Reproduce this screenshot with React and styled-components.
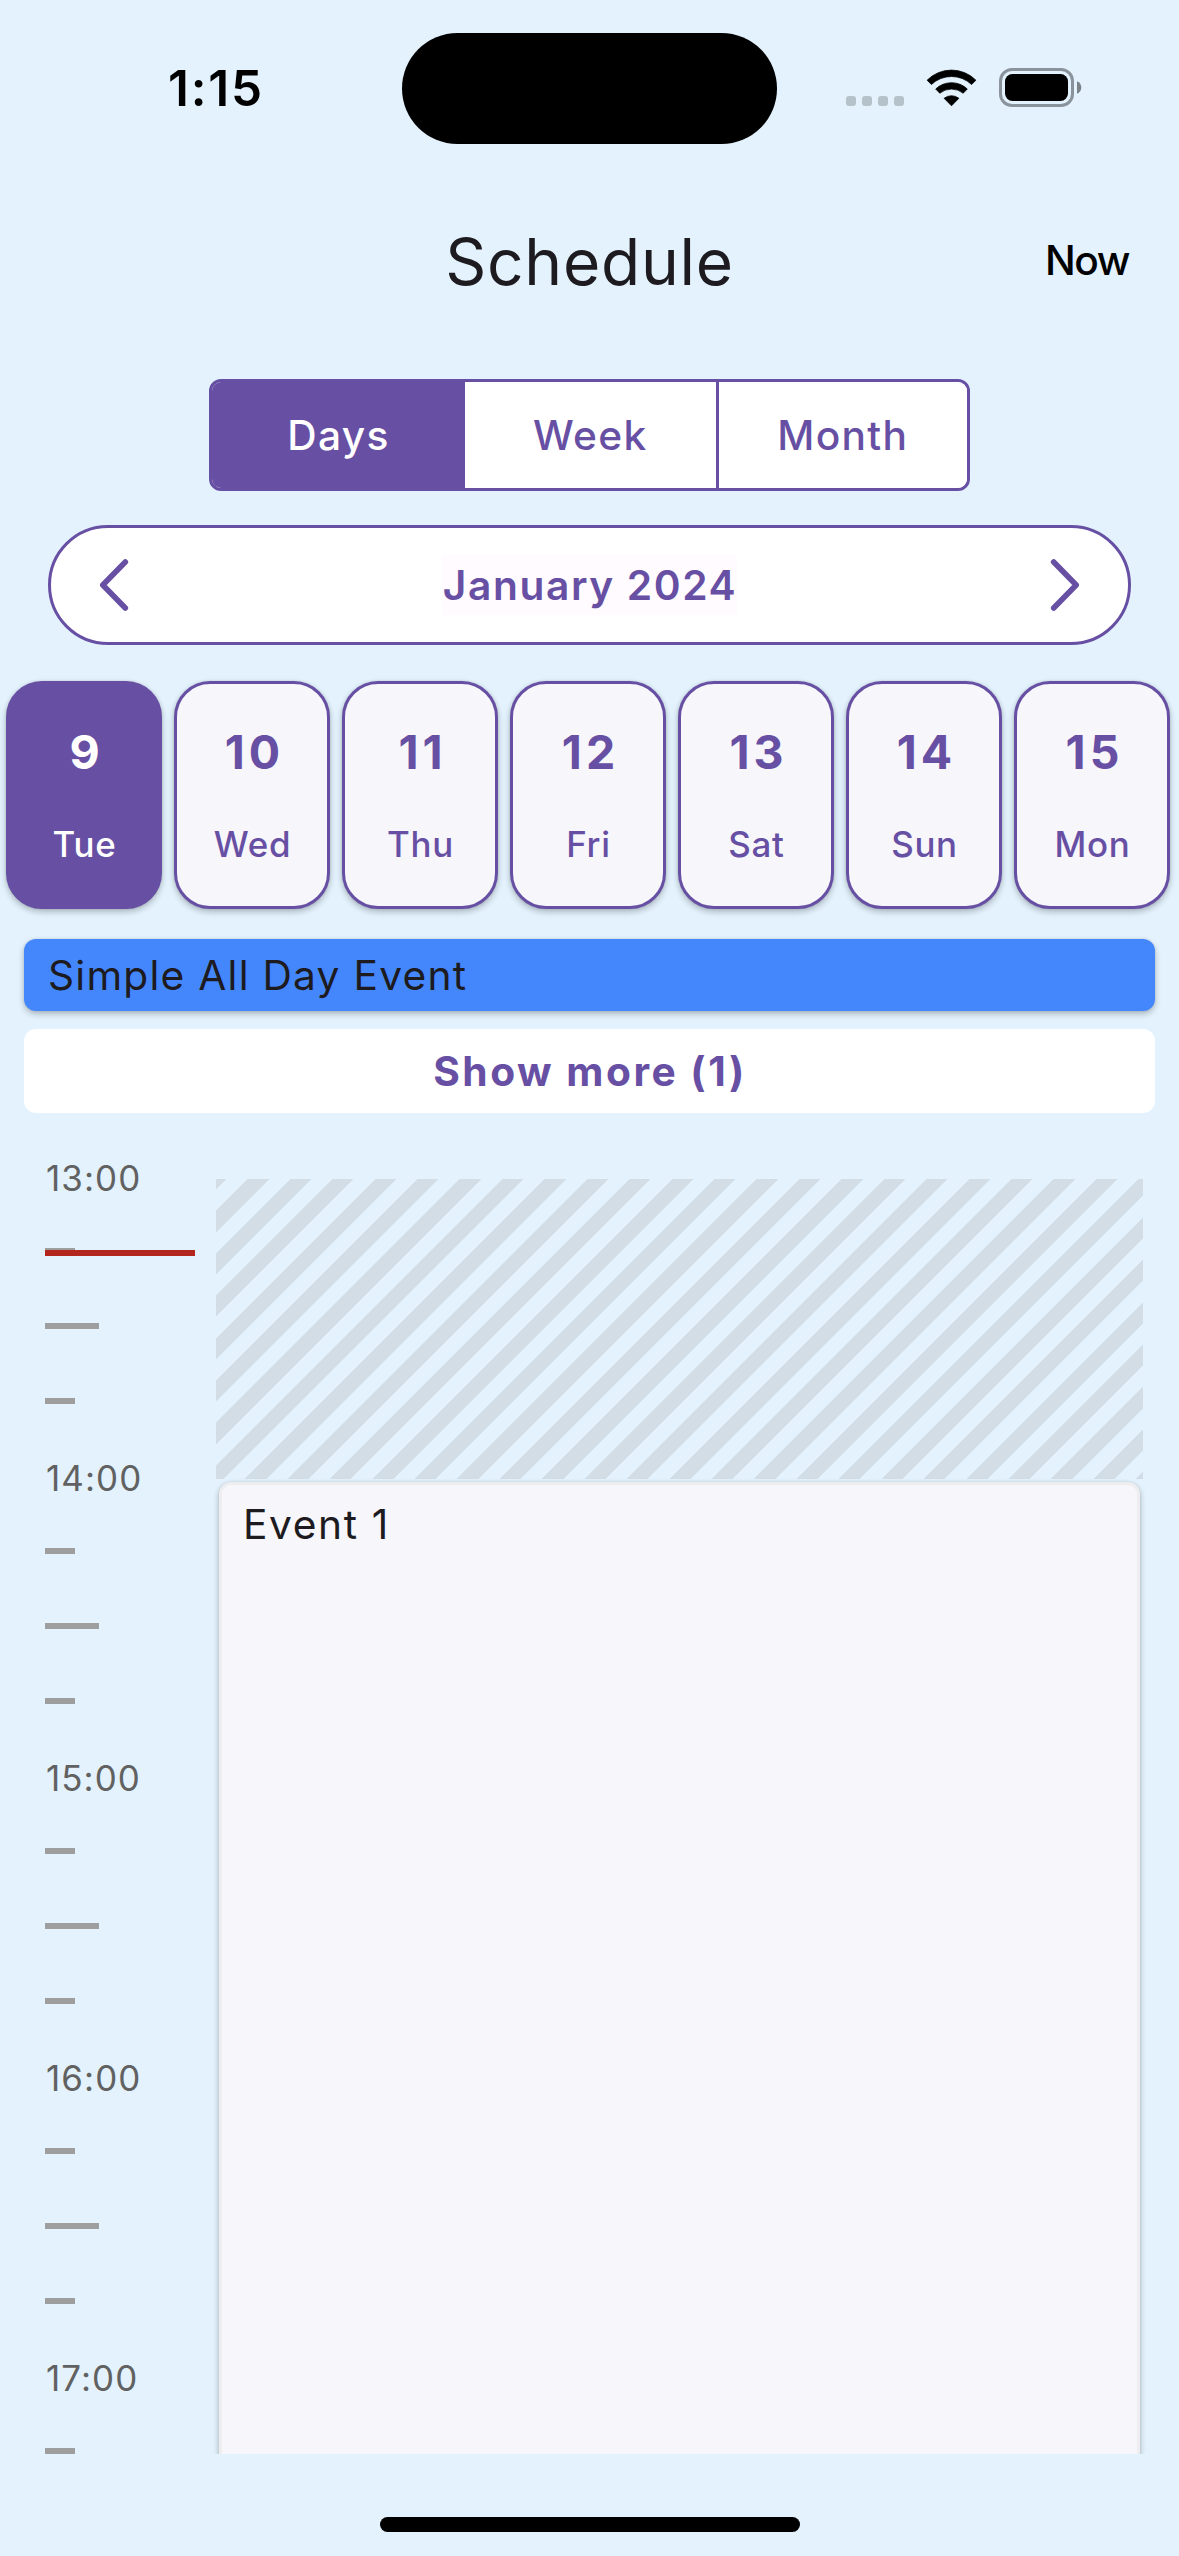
import React from "react";
import styled, { createGlobalStyle, css } from "styled-components";

const color = {
  page: "#e3f2fd",
  primary: "#6750a4",
  surface: "#f7f6fb",
  label: "#fffbff",
  text: "#1d1b20",
  hour: "#616161",
  tick: "#9e9e9e",
  now: "#b3261e",
  allDay: "#4487fc",
};

const cardShadow = "0 3px 6px rgba(0, 0, 0, 0.24), 0 0 3px rgba(0, 0, 0, 0.1)";

const GlobalStyle = createGlobalStyle`
  *, *::before, *::after { box-sizing: border-box; }
  body {
    margin: 0;
    background: ${color.page};
    font-family: Inter, "Liberation Sans", sans-serif;
  }
  button { font: inherit; color: inherit; background: none; border: 0; padding: 0; }
`;

const Screen = styled.div`
  display: flex;
  flex-direction: column;
  width: 1179px;
  height: 2556px;
  overflow: hidden;
  background: ${color.page};
  color: ${color.text};
`;

/* Status bar */

const StatusBar = styled.div`
  display: grid;
  grid-template-columns: 402px 375px 402px;
  align-items: center;
  height: 177px;
  color: #000;
`;

const Clock = styled.div`
  padding: 0 0 1px 168px;
  font-size: 49.4px;
  font-weight: 600;
  letter-spacing: 1.8px;
`;

const Island = styled.div`
  height: 111px;
  border-radius: 56px;
  background: #000;
`;

const StatusIcons = styled.div`
  display: flex;
  align-items: flex-end;
  height: 39px;
  margin-bottom: 2px;
  padding-left: 69px;
`;

const SignalDots = styled.div`
  display: flex;
  gap: 6px;
  margin: 0 22px 1px 0;
`;

const SignalDot = styled.span`
  width: 10px;
  height: 10px;
  border-radius: 3px;
  background: #b5c2ca;
`;

const WifiIcon = styled.svg`
  display: block;
  width: 52px;
  height: 38px;
  margin-right: 21px;
`;

const BatteryIcon = styled.svg`
  display: block;
  width: 83px;
  height: 39px;
`;

/* App bar */

const AppBar = styled.header`
  display: grid;
  grid-template-columns: 1fr auto 1fr;
  align-items: center;
  height: 168px;
`;

const Title = styled.h1`
  grid-column: 2;
  margin: 0;
  font-size: 64px;
  font-weight: 400;
  letter-spacing: 0.74px;
`;

const NowButton = styled.button`
  && {
    justify-self: end;
    padding: 0 50px 2px 0;
    color: #000;
    font-size: 40.7px;
    font-weight: 500;
    letter-spacing: -1.5px;
  }
`;

/* View switch */

const ViewSwitch = styled.div`
  display: grid;
  grid-template-columns: 253px 250.5px 1fr;
  align-self: center;
  width: 761px;
  height: 112px;
  margin-top: 34px;
  border: 3px solid ${color.primary};
  border-radius: 12px;
  background: #fff;
  overflow: hidden;
`;

const ViewOption = styled.button`
  && {
    color: ${(p) => (p.$active ? "#fff" : color.primary)};
    background: ${(p) => (p.$active ? color.primary : "#fff")};
    border-left: ${(p) => (p.$divided ? `3px solid ${color.primary}` : "0")};
    font-size: 40.7px;
    font-weight: 500;
    letter-spacing: 1.3px;
  }
`;

/* Month navigation */

const MonthBar = styled.nav`
  display: flex;
  align-items: center;
  justify-content: space-between;
  height: 120px;
  margin: 34px 48px 0;
  padding: 0 48px;
  border: 3px solid ${color.primary};
  border-radius: 60px;
  background: #fff;
  color: ${color.primary};
`;

const ArrowButton = styled.button`
  display: flex;
`;

const Chevron = styled.svg`
  width: 30px;
  height: 52px;
  fill: none;
  stroke: currentColor;
  stroke-width: 5.6;
  stroke-linecap: round;
  stroke-linejoin: round;
  transform: ${(p) => (p.$flip ? "scaleX(-1)" : "none")};
`;

const MonthLabel = styled.span`
  height: 60px;
  padding: 1px 0 0 1px;
  background: ${color.label};
  font-size: 40.7px;
  font-weight: 600;
  line-height: 60px;
  letter-spacing: 1.6px;
`;

/* Day strip */

const DayStrip = styled.div`
  display: flex;
  gap: 12px;
  margin-top: 36px;
  padding-left: 6px;
`;

const DayCard = styled.button`
  && {
    display: flex;
    flex: 0 0 156px;
    flex-direction: column;
    align-items: center;
    height: 228px;
    padding-top: 40px;
    border: 3px solid ${color.primary};
    border-radius: 36px;
    box-shadow: ${cardShadow};
    color: ${color.primary};
    background: ${color.surface};
    ${(p) =>
      p.$active &&
      css`
        color: #fff;
        background: ${color.primary};
      `}
  }
`;

const DayNumber = styled.span`
  font-size: 46.5px;
  font-weight: 700;
  line-height: 56px;
  letter-spacing: 4px;
  text-indent: 5px;
`;

const DayName = styled.span`
  margin-top: 42px;
  font-size: 34.9px;
  font-weight: 500;
  line-height: 44px;
  letter-spacing: 0.7px;
  text-indent: 1px;
`;

/* All-day events */

const AllDayEvent = styled.div`
  height: 72px;
  margin: 30px 24px 0;
  padding: 1px 0 0 24px;
  border-radius: 12px;
  background: ${color.allDay};
  box-shadow: ${cardShadow};
  font-size: 40.7px;
  line-height: 72px;
  letter-spacing: 1.25px;
`;

const ShowMore = styled.button`
  && {
    height: 84px;
    margin: 18px 24px 0;
    padding-left: 1px;
    border-radius: 12px;
    background: #fff;
    color: ${color.primary};
    font-size: 40.7px;
    font-weight: 700;
    letter-spacing: 2.5px;
  }
`;

/* Timeline */

const Timeline = styled.main`
  position: relative;
  display: grid;
  grid-template-columns: 171px 927px;
  height: 1300px;
  margin-top: 41px;
  padding-left: 45px;
  overflow: hidden;
`;

const Hour = styled.div`
  height: 300px;
`;

const HourLabel = styled.div`
  height: 48px;
  margin-bottom: 46px;
  padding-left: 1px;
  color: ${color.hour};
  font-size: 34.9px;
  line-height: 49px;
  letter-spacing: 1.1px;
`;

const Tick = styled.div`
  width: ${(p) => (p.$long ? 54 : 30)}px;
  height: 6px;
  background: ${color.tick};

  & + & {
    margin-top: 69px;
  }
`;

const NowLine = styled.div`
  position: absolute;
  top: 96px;
  left: 45px;
  width: 150px;
  height: 6px;
  background: ${color.now};
`;

const Lane = styled.div`
  display: flex;
  flex-direction: column;
  padding-top: 25px;
`;

const BlockedTime = styled.div`
  flex: 0 0 300px;
  background: repeating-linear-gradient(
    135deg,
    #d2dde5 0 7.5px,
    transparent 7.5px 22.5px,
    #d2dde5 22.5px 30px
  );
`;

const EventCard = styled.article`
  flex: 0 0 1194px;
  margin: 3px;
  padding: 15px 21px;
  border: 3px solid #eeeef1;
  border-radius: 12px;
  background: ${color.surface};
  box-shadow: ${cardShadow};
  font-size: 40.7px;
  line-height: 50px;
  letter-spacing: 1.6px;
`;

const HomeIndicator = styled.div`
  align-self: center;
  width: 420px;
  height: 15px;
  margin-top: 63px;
  border-radius: 8px;
  background: #000;
`;

const days = [
  ["9", "Tue"],
  ["10", "Wed"],
  ["11", "Thu"],
  ["12", "Fri"],
  ["13", "Sat"],
  ["14", "Sun"],
  ["15", "Mon"],
];

const hours = ["13:00", "14:00", "15:00", "16:00", "17:00"];

const Arrow = ({ flip, label }) => (
  <ArrowButton aria-label={label}>
    <Chevron $flip={flip} viewBox="0 0 30 52">
      <path d="M26.3 3 3.8 26l22.5 23" />
    </Chevron>
  </ArrowButton>
);

export default function App() {
  return (
    <>
      <GlobalStyle />
      <Screen>
        <StatusBar>
          <Clock>1:15</Clock>
          <Island />
          <StatusIcons>
            <SignalDots>
              <SignalDot />
              <SignalDot />
              <SignalDot />
              <SignalDot />
            </SignalDots>
            <WifiIcon viewBox="0 0 52 38">
              <g stroke="#000" strokeWidth="0.8" strokeLinejoin="round">
                <path d="M1.1 11.2A34.5 34.5 0 0 1 49.9 11.2L45.6 15.5A29.2 29.2 0 0 0 5.4 15.5Z" />
                <path d="M9.7 20A23 23 0 0 1 41.3 20L37.2 24.2A18.6 18.6 0 0 0 13.8 24.2Z" />
                <path d="M18.1 29.3A12 12 0 0 1 32.9 29.3L25.5 36.8Z" />
              </g>
            </WifiIcon>
            <BatteryIcon viewBox="0 0 83 39">
              <rect x="1.5" y="1.5" width="72" height="36" rx="11.5" fill="none" stroke="#8a939b" strokeWidth="3" />
              <rect x="6" y="6" width="63" height="27" rx="7.5" />
              <path d="M78 13.2c2.8 1 4.3 3.6 4.3 6.3S80.8 24.8 78 25.8Z" fill="#7b8389" />
            </BatteryIcon>
          </StatusIcons>
        </StatusBar>

        <AppBar>
          <Title>Schedule</Title>
          <NowButton>Now</NowButton>
        </AppBar>

        <ViewSwitch>
          <ViewOption $active>Days</ViewOption>
          <ViewOption>Week</ViewOption>
          <ViewOption $divided>Month</ViewOption>
        </ViewSwitch>

        <MonthBar>
          <Arrow label="Previous" />
          <MonthLabel>January 2024</MonthLabel>
          <Arrow label="Next" flip />
        </MonthBar>

        <DayStrip>
          {days.map(([number, name], i) => (
            <DayCard key={number} $active={i === 0}>
              <DayNumber>{number}</DayNumber>
              <DayName>{name}</DayName>
            </DayCard>
          ))}
        </DayStrip>

        <AllDayEvent>Simple All Day Event</AllDayEvent>
        <ShowMore>Show more (1)</ShowMore>

        <Timeline>
          <div>
            {hours.map((hour) => (
              <Hour key={hour}>
                <HourLabel>{hour}</HourLabel>
                <Tick />
                <Tick $long />
                <Tick />
              </Hour>
            ))}
          </div>
          <Lane>
            <BlockedTime />
            <EventCard>Event 1</EventCard>
          </Lane>
          <NowLine />
        </Timeline>

        <HomeIndicator />
      </Screen>
    </>
  );
}
